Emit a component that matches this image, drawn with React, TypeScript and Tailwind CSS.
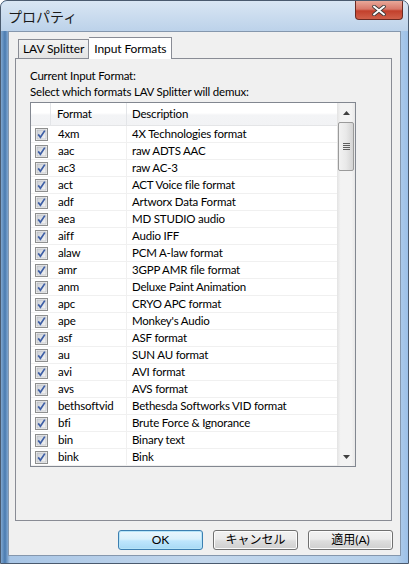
import React from "react";

const rows: [string, string][] = [
  ["4xm", "4X Technologies format"],
  ["aac", "raw ADTS AAC"],
  ["ac3", "raw AC-3"],
  ["act", "ACT Voice file format"],
  ["adf", "Artworx Data Format"],
  ["aea", "MD STUDIO audio"],
  ["aiff", "Audio IFF"],
  ["alaw", "PCM A-law format"],
  ["amr", "3GPP AMR file format"],
  ["anm", "Deluxe Paint Animation"],
  ["apc", "CRYO APC format"],
  ["ape", "Monkey's Audio"],
  ["asf", "ASF format"],
  ["au", "SUN AU format"],
  ["avi", "AVI format"],
  ["avs", "AVS format"],
  ["bethsoftvid", "Bethesda Softworks VID format"],
  ["bfi", "Brute Force & Ignorance"],
  ["bin", "Binary text"],
  ["bink", "Bink"],
];

function Check() {
  return (
    <svg width="13" height="13" viewBox="0 0 13 13">
      <defs>
        <linearGradient id="cbg" x1="0" y1="0" x2="1" y2="1">
          <stop offset="0" stopColor="#cbcfd5" />
          <stop offset="1" stopColor="#f6f6f6" />
        </linearGradient>
      </defs>
      <rect x="0.5" y="0.5" width="12" height="12" fill="#f4f4f4" stroke="#8e8f8f" />
      <rect x="2" y="2" width="9" height="9" fill="url(#cbg)" stroke="#aeb3b9" strokeWidth="0.6" />
      <path d="M3.2 6.4 L5.4 9.2 L9.8 2.6" fill="none" stroke="#3d5ea5" strokeWidth="1.7" />
    </svg>
  );
}

export default function App() {
  const font = { fontFamily: 'Lato, "Noto Sans CJK JP", sans-serif' };
  return (
    <div
      className="w-[409px] h-[564px] flex flex-col rounded-t-[7px] border border-[#4a5a6e] bg-[linear-gradient(90deg,#7fa6cf_0px,#4a7bb0_4px,#a9c6e6_9px,#c3d7ec_50%,#b4cfea_97%,#9cc0e8_100%)] overflow-hidden text-[11.5px] tracking-[-0.2px] text-black"
      style={font}
    >
      {/* title bar */}
      <div className="h-[30px] flex items-start shrink-0 bg-[linear-gradient(180deg,#d9e6f3,#bcd2ea)]">
        <div className="pl-[7px] pt-[6px] text-[14px] tracking-normal text-[#1a1a1a] leading-[18px]" style={{ fontFamily: '"Noto Sans CJK JP", sans-serif' }}>プロパティ</div>
        <div className="flex-1" />
        <div className="mr-[5px] w-[48px] h-[19px] rounded-b-[4px] border border-t-0 border-[#6b2a22] bg-[linear-gradient(180deg,#e9a899_0%,#d8786a_45%,#c2402c_55%,#d0604a_100%)] flex items-center justify-center">
          <svg width="14" height="11" viewBox="0 0 14 11">
            <path d="M2 1.5 L12 9.5 M12 1.5 L2 9.5" stroke="#3a3a3a" strokeWidth="3.6" strokeLinecap="round" />
            <path d="M2 1.5 L12 9.5 M12 1.5 L2 9.5" stroke="#ffffff" strokeWidth="2" strokeLinecap="round" />
          </svg>
        </div>
      </div>
      {/* client */}
      <div className="flex-1 mx-[7px] mb-[7px] border border-[#8597ad] bg-[#f0f0f0] flex flex-col">
        <div className="pl-[6px] pr-[8px] pt-[4px] flex flex-col">
          {/* tabs */}
          <div className="flex items-end h-[22px] pl-[3px]">
            <div className="h-[19px] px-[4px] border border-b-0 border-[#898c95] bg-[linear-gradient(180deg,#f3f3f3,#e4e4e4)] flex items-center text-[12px] tracking-[-0.1px] leading-none">
              LAV Splitter
            </div>
            <div className="h-[22px] px-[5px] border border-b-0 border-l-0 border-[#898c95] bg-white flex items-center text-[12px] tracking-[-0.1px] leading-none relative top-[1px] z-10">
              Input Formats
            </div>
          </div>
          {/* panel */}
          <div className="h-[463px] border border-[#898c95] bg-[#f0f0f0] pl-[14px] pt-[9px]">
            <div className="leading-[16px]">Current Input Format:</div>
            <div className="leading-[16px]">Select which formats LAV Splitter will demux:</div>
            <div className="mt-[2px] w-[326px] h-[365px] border border-[#828790] bg-white flex">
              <div className="w-[306px] flex flex-col">
                <div className="h-[23px] flex border-b border-[#e4e5e7] bg-[linear-gradient(180deg,#ffffff_0%,#ffffff_45%,#f3f4f6_55%,#f2f3f5_100%)]">
                  <div className="w-[20px] border-r border-[#e3e5e8]" />
                  <div className="w-[76px] border-r border-[#e3e5e8] pl-[6px] flex items-center">Format</div>
                  <div className="flex-1 pl-[5px] flex items-center">Description</div>
                </div>
                {rows.map(([f, d]) => (
                  <div key={f} className="h-[17px] flex border-b border-[#f0f0f0]">
                    <div className="w-[20px] flex items-center justify-center pl-[1px]">
                      <Check />
                    </div>
                    <div className="w-[76px] border-r border-[#f0f0f0] pl-[7px] flex items-center leading-none">{f}</div>
                    <div className="flex-1 pl-[5px] flex items-center leading-none whitespace-nowrap">{d}</div>
                  </div>
                ))}
              </div>
              {/* scrollbar */}
              <div className="w-[18px] flex flex-col bg-[linear-gradient(90deg,#e3e3e3,#f3f3f3_20%,#f3f3f3_80%,#e8e8e8)]">
                <div className="h-[19px] flex items-center justify-center">
                  <svg width="7" height="4" viewBox="0 0 7 4"><path d="M0 4 L3.5 0 L7 4Z" fill="#404040" /></svg>
                </div>
                <div className="mx-[1px] h-[49px] rounded-[2px] border border-[#9a9a9a] bg-[linear-gradient(90deg,#f2f2f2,#e9e9e9_50%,#d4d4d4)] flex items-center justify-center">
                  <div className="flex flex-col gap-[1px]">
                    <div className="w-[7px] h-[1px] bg-[#5e5e5e]" />
                    <div className="w-[7px] h-[1px] bg-[#5e5e5e]" />
                    <div className="w-[7px] h-[1px] bg-[#5e5e5e]" />
                    <div className="w-[7px] h-[1px] bg-[#5e5e5e]" />
                  </div>
                </div>
                <div className="flex-1" />
                <div className="h-[19px] flex items-center justify-center">
                  <svg width="7" height="4" viewBox="0 0 7 4"><path d="M0 0 L7 0 L3.5 4Z" fill="#404040" /></svg>
                </div>
              </div>
            </div>
          </div>
        </div>
        {/* buttons */}
        <div className="flex justify-end gap-[10px] pr-[7px] pt-[9px]">
          <button className="w-[85px] h-[20px] rounded-[3px] border border-[#3c7fb1] bg-[linear-gradient(180deg,#eaf6fd_0%,#d9f0fc_45%,#bee6fd_55%,#a7d9f5_100%)] shadow-[inset_0_0_0_1px_#b6e4f8] text-[12px] tracking-normal leading-none">
            OK
          </button>
          <button className="w-[85px] h-[20px] rounded-[3px] border border-[#707070] bg-[linear-gradient(180deg,#f2f2f2_0%,#ebebeb_45%,#dddddd_55%,#cfcfcf_100%)] shadow-[inset_0_0_0_1px_#fcfcfc] text-[12px] tracking-normal leading-none">
            キャンセル
          </button>
          <button className="w-[85px] h-[20px] rounded-[3px] border border-[#707070] bg-[linear-gradient(180deg,#f2f2f2_0%,#ebebeb_45%,#dddddd_55%,#cfcfcf_100%)] shadow-[inset_0_0_0_1px_#fcfcfc] text-[12px] tracking-normal leading-none">
            適用(A)
          </button>
        </div>
      </div>
    </div>
  );
}
